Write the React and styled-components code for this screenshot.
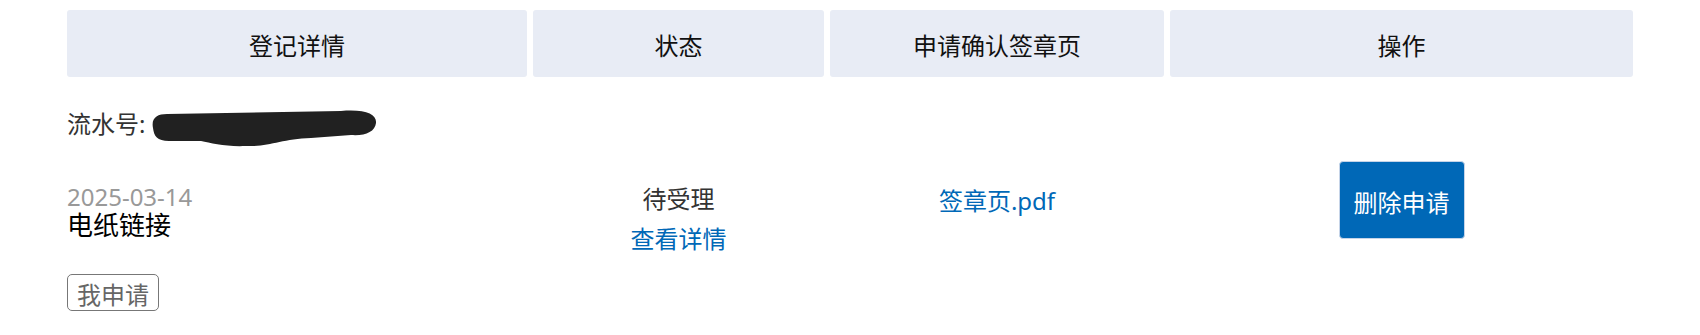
import React from 'react';
import styled, { createGlobalStyle } from 'styled-components';

const GlobalStyle = createGlobalStyle`
  body {
    margin: 0;
    background: #fff;
    font-family: "Noto Sans", "Noto Sans CJK SC", sans-serif;
    color: #333;
  }
`;

const columns = '460px 291px 334px 463px';

const App = () => {
    return (
        <>
            <GlobalStyle />
            <Page>
                <HeaderRow>
                    <HeaderCell>登记详情</HeaderCell>
                    <HeaderCell>状态</HeaderCell>
                    <HeaderCell>申请确认签章页</HeaderCell>
                    <HeaderCell>操作</HeaderCell>
                </HeaderRow>

                <SerialLine>
                    流水号:
                    <Redaction viewBox="0 0 226 38" width="226" height="38" aria-hidden="true">
                        <path
                            d="M2 18 C0 8, 6 4, 16 4 L190 1 C214 -1, 226 4, 225 13 C224 22, 214 26, 200 25 L160 28 C130 29, 118 37, 95 36 C75 37, 60 33, 50 31 L18 31 C6 31, 3 26, 2 18 Z"
                            fill="#212121"
                        />
                    </Redaction>
                </SerialLine>

                <DataRow>
                    <Cell $pt={34} $align="left">
                        <DateText>2025-03-14</DateText>
                        <Title>电纸链接</Title>
                        <Tag>我申请</Tag>
                    </Cell>
                    <Cell $pt={33}>
                        <Status>待受理</Status>
                        <Link href="#" $mt={8}>查看详情</Link>
                    </Cell>
                    <Cell $pt={35}>
                        <Link href="#">签章页.pdf</Link>
                    </Cell>
                    <Cell $pt={11}>
                        <DeleteButton>删除申请</DeleteButton>
                    </Cell>
                </DataRow>
            </Page>
        </>
    );
};

export default App;

// Styled components
const Page = styled.div`
  padding: 10px 67px 0;
`;

const HeaderRow = styled.div`
  display: grid;
  grid-template-columns: ${columns};
  column-gap: 6px;
`;

const HeaderCell = styled.div`
  height: 67px;
  display: flex;
  align-items: center;
  justify-content: center;
  background-color: #e8ecf5;
  border-radius: 3px;
  font-size: 24px;
  color: #111;
  padding-top: 2px;
  box-sizing: border-box;
`;

const SerialLine = styled.div`
  display: flex;
  align-items: center;
  height: 32px;
  margin-top: 31px;
  font-size: 24px;
  line-height: 32px;
  color: #333;
`;

const Redaction = styled.svg`
  display: block;
  margin-left: 6px;
  margin-top: 10px;
`;

const DataRow = styled.div`
  display: grid;
  grid-template-columns: ${columns};
  column-gap: 6px;
  align-items: start;
  margin-top: 10px;
`;

const Cell = styled.div`
  display: flex;
  flex-direction: column;
  align-items: ${(p) => (p.$align === 'left' ? 'flex-start' : 'center')};
  padding-top: ${(p) => p.$pt}px;
`;

const DateText = styled.div`
  font-size: 24px;
  line-height: 26px;
  color: #999;
`;

const Title = styled.div`
  font-size: 26px;
  line-height: 30px;
  color: #000;
`;

const Tag = styled.span`
  margin-top: 34px;
  border: 1px solid #777;
  border-radius: 5px;
  padding: 4px 9px 0;
  font-size: 24px;
  line-height: 31px;
  color: #666;
`;

const Status = styled.div`
  font-size: 24px;
  line-height: 32px;
  color: #333;
`;

const Link = styled.a`
  display: block;
  margin-top: ${(p) => p.$mt || 0}px;
  font-size: 24px;
  line-height: 32px;
  color: #0068b7;
  text-decoration: none;
`;

const DeleteButton = styled.button`
  height: 78px;
  padding: 2px 14px 0;
  border: 1px solid #c6d4e8;
  border-radius: 4px;
  background-color: #0068b7;
  color: #fff;
  font-family: "Noto Sans", "Noto Sans CJK SC", sans-serif;
  font-size: 24px;
  cursor: pointer;
`;
